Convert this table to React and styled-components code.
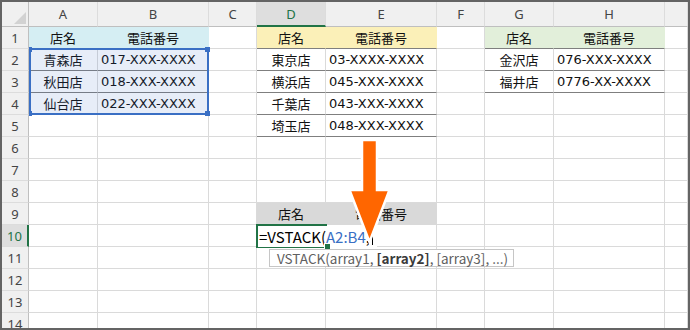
import React from "react";
import styled, { createGlobalStyle } from "styled-components";

const GlobalStyle = createGlobalStyle`
  html, body {
    margin: 0;
    padding: 0;
    background: #ffffff;
  }
`;

const GRID = "#dadada";
const HEAD_EDGE = "#bfbfbf";
const TABLE_LINE = "#7f7f7f";
const EXCEL_GREEN = "#217346";
const REF_BLUE = "#3a6fc4";

const CYAN = "#d5eef3";
const YELLOW = "#fbf0b8";
const LEAF = "#e2efda";
const GRAY = "#d9d9d9";

const COLS = ["A", "B", "C", "D", "E", "F", "G", "H", "I"];
const ROW_COUNT = 14;

// cell contents keyed by address
const cells = {};
const put = (addr, text, opts = {}) => {
  cells[addr] = { text, ...opts };
};

// 東北の表
put("A1", "店名", { fill: CYAN, center: true, line: true });
put("B1", "電話番号", { fill: CYAN, center: true, line: true });
put("A2", "青森店", { center: true, line: true });
put("B2", "017-XXX-XXXX", { line: true });
put("A3", "秋田店", { center: true, line: true });
put("B3", "018-XXX-XXXX", { line: true });
put("A4", "仙台店", { center: true, line: true });
put("B4", "022-XXX-XXXX", { line: true });

// 関東の表
put("D1", "店名", { fill: YELLOW, center: true, line: true });
put("E1", "電話番号", { fill: YELLOW, center: true, line: true });
put("D2", "東京店", { center: true, line: true });
put("E2", "03-XXXX-XXXX", { line: true });
put("D3", "横浜店", { center: true, line: true });
put("E3", "045-XXX-XXXX", { line: true });
put("D4", "千葉店", { center: true, line: true });
put("E4", "043-XXX-XXXX", { line: true });
put("D5", "埼玉店", { center: true, line: true });
put("E5", "048-XXX-XXXX", { line: true });

// 北陸の表
put("G1", "店名", { fill: LEAF, center: true, line: true });
put("H1", "電話番号", { fill: LEAF, center: true, line: true });
put("G2", "金沢店", { center: true, line: true });
put("H2", "076-XXX-XXXX", { line: true });
put("G3", "福井店", { center: true, line: true });
put("H3", "0776-XX-XXXX", { line: true });

// 結合先の見出し
put("D9", "店名", { fill: GRAY, center: true });
put("E9", "電話番号", { fill: GRAY, center: true });

const Frame = styled.div`
  position: relative;
  width: 690px;
  height: 330px;
  box-sizing: border-box;
  border: 2px solid #646464;
  overflow: hidden;
  background: #ffffff;
`;

const Sheet = styled.div`
  display: grid;
  grid-template-columns: 27px 69px 111px 48px 69px 111px 48px 69px 111px 1fr;
  grid-template-rows: 25px repeat(${ROW_COUNT}, 22px);
`;

const Corner = styled.div`
  grid-row: 1;
  grid-column: 1;
  position: relative;
  box-sizing: border-box;
  background: #f0f0f0;
  border-right: 1px solid ${HEAD_EDGE};
  border-bottom: 1px solid ${HEAD_EDGE};

  &::after {
    content: "";
    position: absolute;
    right: 2px;
    bottom: 2px;
    width: 0;
    height: 0;
    border-left: 12px solid transparent;
    border-bottom: 12px solid #d2d2d2;
  }
`;

const ColHead = styled.div`
  grid-row: 1;
  grid-column: ${(p) => p.$c};
  box-sizing: border-box;
  display: flex;
  align-items: center;
  justify-content: center;
  background: ${(p) => (p.$active ? "#dedede" : "#f0f0f0")};
  border-right: 1px solid #dcdcdc;
  border-bottom: ${(p) =>
    p.$active ? `2px solid ${EXCEL_GREEN}` : `1px solid ${HEAD_EDGE}`};
  color: ${(p) => (p.$active ? EXCEL_GREEN : "#444444")};
  font: 13px "Noto Sans", "DejaVu Sans", sans-serif;
  padding-top: ${(p) => (p.$active ? "1px" : "0")};
`;

const RowHead = styled.div`
  grid-row: ${(p) => p.$r};
  grid-column: 1;
  box-sizing: border-box;
  display: flex;
  align-items: center;
  justify-content: center;
  background: ${(p) => (p.$active ? "#dedede" : "#f0f0f0")};
  border-bottom: 1px solid #dcdcdc;
  border-right: ${(p) =>
    p.$active ? `2px solid ${EXCEL_GREEN}` : `1px solid ${HEAD_EDGE}`};
  color: ${(p) => (p.$active ? EXCEL_GREEN : "#444444")};
  font: 13px "Noto Sans", "DejaVu Sans", sans-serif;
`;

const Cell = styled.div`
  grid-row: ${(p) => p.$r};
  grid-column: ${(p) => p.$c};
  box-sizing: border-box;
  display: flex;
  align-items: center;
  justify-content: ${(p) => (p.$center ? "center" : "flex-start")};
  padding: 0 3px 1px;
  overflow: hidden;
  white-space: nowrap;
  background: ${(p) => p.$fill || "transparent"};
  border-right: 1px solid ${(p) => p.$fill || GRID};
  border-bottom: 1px solid
    ${(p) => (p.$line ? TABLE_LINE : p.$fill || GRID)};
  color: #111111;
  font: 13px "DejaVu Sans", "Noto Sans CJK JP", sans-serif;
`;

const RefRange = styled.div`
  grid-row: 3 / 6;
  grid-column: 2 / 4;
  position: relative;
  margin-top: -1px;
  box-sizing: border-box;
  border: 2px solid ${REF_BLUE};
  background: rgba(58, 111, 196, 0.12);
  pointer-events: none;
  z-index: 2;
`;

const Handle = styled.span`
  position: absolute;
  width: ${(p) => (p.$left ? "3px" : "5px")};
  height: 5px;
  background: ${REF_BLUE};
  ${(p) => (p.$left ? "left: -2px;" : "right: -3px;")}
  ${(p) => (p.$top ? "top: -3px;" : "bottom: -3px;")}
`;

const ActiveCell = styled.div`
  grid-row: 11;
  grid-column: 5;
  position: relative;
  z-index: 3;
  margin: -1px -1px -1px -1px;
  box-sizing: border-box;
  border: 2px solid ${EXCEL_GREEN};
  border-right: none;
  display: flex;
`;

const EditText = styled.div`
  display: flex;
  align-items: center;
  height: 100%;
  padding: 0 4px 1px 1px;
  background: #ffffff;
  white-space: nowrap;
  color: #000000;
  font: 15px "Noto Sans CJK JP", "Noto Sans", sans-serif;
`;

const RefText = styled.span`
  color: ${REF_BLUE};
`;

const Caret = styled.span`
  display: inline-block;
  width: 0;
  height: 14px;
  margin: 3px 0 0 2px;
  border-left: 1px solid #000000;
`;

const FillHandle = styled.span`
  position: absolute;
  right: -4px;
  bottom: -4px;
  width: 5px;
  height: 5px;
  background: ${EXCEL_GREEN};
  border: 1px solid #ffffff;
`;

const Tip = styled.div`
  position: absolute;
  top: 23px;
  left: 11px;
  height: 18px;
  box-sizing: border-box;
  display: flex;
  align-items: center;
  padding: 0 5px 1px 7px;
  border: 1px solid #c6c6c6;
  background: #ffffff;
  white-space: nowrap;
  color: #606060;
  font: 13.5px "Noto Sans CJK JP", "Noto Sans", sans-serif;

  b {
    color: #3a3a3a;
    font-weight: 700;
  }
`;

const Arrow = styled.svg`
  position: absolute;
  left: 344px;
  top: 135px;
  z-index: 5;
  overflow: visible;
`;

function DownArrow() {
  return (
    <Arrow width="48" height="110" viewBox="0 0 48 110">
      <polygon
        points="16,3 31,3 31,53 43.5,53 23.5,105 3.5,53 16,53"
        fill="#ff6600"
        stroke="#ffffff"
        strokeWidth="2.5"
        strokeLinejoin="miter"
      />
    </Arrow>
  );
}

export default function App() {
  const body = [];
  for (let r = 1; r <= ROW_COUNT; r++) {
    body.push(
      <RowHead key={`h${r}`} $r={r + 1} $active={r === 10}>
        {r}
      </RowHead>
    );
    COLS.forEach((col, i) => {
      const data = cells[`${col}${r}`] || {};
      body.push(
        <Cell
          key={`${col}${r}`}
          $r={r + 1}
          $c={i + 2}
          $fill={data.fill}
          $line={data.line}
          $center={data.center}
        >
          {data.text}
        </Cell>
      );
    });
  }

  return (
    <>
      <GlobalStyle />
      <Frame>
        <Sheet>
          <Corner />
          {COLS.map((col, i) => (
            <ColHead key={col} $c={i + 2} $active={col === "D"}>
              {col === "I" ? "" : col}
            </ColHead>
          ))}
          {body}

          <RefRange>
            <Handle $left $top />
            <Handle $top />
            <Handle $left />
            <Handle />
          </RefRange>

          <ActiveCell>
            <EditText>
              =VSTACK(<RefText>A2:B4</RefText>,<Caret />
            </EditText>
            <FillHandle />
            <Tip>
              VSTACK(array1,&nbsp;<b>[array2]</b>, [array3], ...)
            </Tip>
          </ActiveCell>
        </Sheet>
        <DownArrow />
      </Frame>
    </>
  );
}
